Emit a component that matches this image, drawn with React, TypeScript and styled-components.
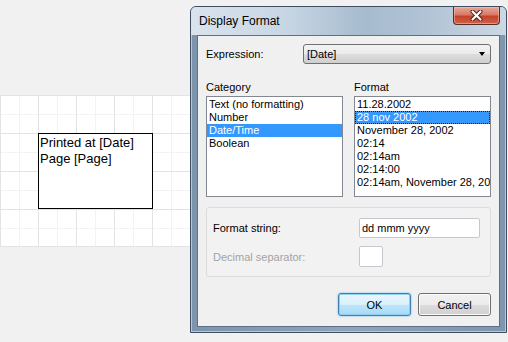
import React from "react";
import styled, { createGlobalStyle } from "styled-components";

const Global = createGlobalStyle`
  html, body { margin: 0; padding: 0; background: #f0f0f0; }
  body { font-family: "Liberation Sans", Arial, sans-serif; }
  * { box-sizing: border-box; }
`;

const Page = styled.div`
  width: 508px;
  height: 342px;
  display: flex;
  align-items: flex-start;
  background: #f1f1f1;
  overflow: hidden;
`;

const LeftPane = styled.div`
  width: 190px;
  flex: none;
  display: flex;
  flex-direction: column;
  padding-top: 95px;
`;

const Grid = styled.div`
  position: relative;
  height: 152px;
  background-color: #ffffff;
  background-image:
    linear-gradient(to right, #e3e3e3 1px, transparent 1px),
    linear-gradient(to bottom, #e3e3e3 1px, transparent 1px),
    linear-gradient(to right, #f3f3f3 1px, transparent 1px),
    linear-gradient(to bottom, #f3f3f3 1px, transparent 1px);
  background-size: 38px 38px, 38px 38px, 19px 19px, 19px 19px;
  border-bottom: 1px solid #e3e3e3;
`;

const TextBox = styled.div`
  position: absolute;
  left: 38px;
  top: 38px;
  width: 115px;
  height: 76px;
  border: 1px solid #000;
  background: #fff;
  padding: 1px 0 0 1px;
  font-family: "Liberation Sans", Arial, sans-serif;
  font-size: 13px;
  line-height: 16px;
  color: #000;
`;

const Window = styled.div`
  width: 317px;
  height: 327px;
  margin-top: 6px;
  flex: none;
  display: flex;
  flex-direction: column;
  border: 1px solid #3e4e60;
  border-radius: 6px 6px 0 0;
  background: linear-gradient(to right, #7d94ad, #8ea4bb 50%, #7f96af);
  box-shadow: inset 0 0 0 1px #b9c8d8;
`;

const TitleBar = styled.div`
  height: 28px;
  flex: none;
  display: flex;
  align-items: flex-start;
  justify-content: space-between;
  border-radius: 5px 5px 0 0;
  background: linear-gradient(
    to right,
    #d9e3ed 0%,
    #c8d6e4 30%,
    #a7bbcf 55%,
    #b1c3d5 75%,
    #cbd8e5 100%
  );
  padding-left: 8px;
`;

const Title = styled.div`
  padding-top: 7px;
  font-size: 12px;
  line-height: 14px;
  color: #000;
`;

const CloseButton = styled.div`
  width: 47px;
  height: 18px;
  margin-right: 6px;
  display: flex;
  align-items: center;
  justify-content: center;
  border: 1px solid #5a2a24;
  border-top: none;
  border-radius: 0 0 4px 4px;
  background: linear-gradient(
    to bottom,
    #e7a797 0%,
    #d97a66 45%,
    #c2432c 55%,
    #cf6247 100%
  );
  box-shadow: inset 0 0 0 1px rgba(255, 200, 190, 0.5);
`;

const Client = styled.div`
  flex: 1;
  margin: 0 6px 5px 6px;
  border: 1px solid #5c7086;
  background: #f0f0f0;
  padding: 8px 8px 0 8px;
  display: flex;
  flex-direction: column;
  font-size: 11px;
  color: #000;
`;

const ExprRow = styled.div`
  display: flex;
  align-items: center;
  height: 20px;
`;

const ExprLabel = styled.div`
  width: 97px;
  flex: none;
`;

const Combo = styled.div`
  flex: 1;
  height: 20px;
  display: flex;
  align-items: center;
  justify-content: space-between;
  padding: 0 5px 0 3px;
  border: 1px solid #707070;
  border-radius: 3px;
  background: linear-gradient(to bottom, #f3f3f3 0%, #ebebeb 50%, #dddddd 51%, #cfcfcf 100%);
`;

const Arrow = styled.div`
  width: 0;
  height: 0;
  border-left: 3.5px solid transparent;
  border-right: 3.5px solid transparent;
  border-top: 4px solid #000;
`;

const ListsRow = styled.div`
  display: flex;
  gap: 11px;
  margin-top: 16px;
`;

const ListColumn = styled.div`
  width: 137px;
  display: flex;
  flex-direction: column;
  gap: 2px;
`;

const ListLabel = styled.div`
  line-height: 14px;
`;

const ListBox = styled.div`
  height: 101px;
  border: 1px solid #828790;
  background: #fff;
  padding: 1px 0 0 0;
  overflow: hidden;
`;

const Item = styled.div<{ $selected?: boolean; $focused?: boolean }>`
  height: 13px;
  line-height: 13px;
  padding-left: 2px;
  white-space: nowrap;
  overflow: hidden;
  background: ${(p) => (p.$selected ? "#3399ff" : "transparent")};
  color: ${(p) => (p.$selected ? "#fff" : "#000")};
  outline: ${(p) => (p.$focused ? "1px dotted #1a1a1a" : "none")};
  outline-offset: -1px;
`;

const Panel = styled.div`
  margin-top: 10px;
  border: 1px solid #dcdcdc;
  border-radius: 3px;
  background: #f2f2f2;
  padding: 10px 10px 9px 6px;
  display: flex;
  flex-direction: column;
  gap: 8px;
`;

const FieldRow = styled.div`
  display: flex;
  align-items: center;
`;

const FieldLabel = styled.div<{ $disabled?: boolean }>`
  width: 146px;
  flex: none;
  color: ${(p) => (p.$disabled ? "#a3a3a3" : "#000")};
`;

const Input = styled.div<{ $w: number; $h: number }>`
  width: ${(p) => p.$w}px;
  height: ${(p) => p.$h}px;
  border: 1px solid #c5c9cf;
  border-radius: 2px;
  background: #fff;
  padding-left: 2px;
  display: flex;
  align-items: center;
`;

const Buttons = styled.div`
  margin-top: 16px;
  display: flex;
  justify-content: flex-end;
  gap: 7px;
`;

const Button = styled.div<{ $default?: boolean }>`
  width: 73px;
  height: 23px;
  display: flex;
  align-items: center;
  justify-content: center;
  border-radius: 3px;
  border: 1px solid ${(p) => (p.$default ? "#3c7fb1" : "#707070")};
  background: ${(p) =>
    p.$default
      ? "linear-gradient(to bottom, #eaf6fd 0%, #d9f0fc 50%, #bee6fd 51%, #a7d9f5 100%)"
      : "linear-gradient(to bottom, #f2f2f2 0%, #ebebeb 50%, #dddddd 51%, #cfcfcf 100%)"};
  box-shadow: ${(p) =>
    p.$default ? "inset 0 0 0 1px #8ed0f2, 0 0 2px #60b4e6" : "inset 0 0 0 1px #fbfbfb"};
`;

const categories = ["Text (no formatting)", "Number", "Date/Time", "Boolean"];
const formats = [
  "11.28.2002",
  "28 nov 2002",
  "November 28, 2002",
  "02:14",
  "02:14am",
  "02:14:00",
  "02:14am, November 28, 20",
];

export default function App() {
  return (
    <>
      <Global />
      <Page>
        <LeftPane>
          <Grid>
            <TextBox>
              Printed at [Date]
              <br />
              Page [Page]
            </TextBox>
          </Grid>
        </LeftPane>
        <Window>
          <TitleBar>
            <Title>Display Format</Title>
            <CloseButton>
              <svg width="13" height="11" viewBox="0 0 13 11">
                <path
                  d="M2.5 1.5 L10.5 9.5 M10.5 1.5 L2.5 9.5"
                  stroke="#4a1c16"
                  strokeWidth="4"
                  strokeLinecap="round"
                />
                <path
                  d="M2.5 1.5 L10.5 9.5 M10.5 1.5 L2.5 9.5"
                  stroke="#ffffff"
                  strokeWidth="2.2"
                  strokeLinecap="round"
                />
              </svg>
            </CloseButton>
          </TitleBar>
          <Client>
            <ExprRow>
              <ExprLabel>Expression:</ExprLabel>
              <Combo>
                <span>[Date]</span>
                <Arrow />
              </Combo>
            </ExprRow>
            <ListsRow>
              <ListColumn>
                <ListLabel>Category</ListLabel>
                <ListBox>
                  {categories.map((c) => (
                    <Item key={c} $selected={c === "Date/Time"}>
                      {c}
                    </Item>
                  ))}
                </ListBox>
              </ListColumn>
              <ListColumn>
                <ListLabel>Format</ListLabel>
                <ListBox>
                  {formats.map((f) => (
                    <Item
                      key={f}
                      $selected={f === "28 nov 2002"}
                      $focused={f === "28 nov 2002"}
                    >
                      {f}
                    </Item>
                  ))}
                </ListBox>
              </ListColumn>
            </ListsRow>
            <Panel>
              <FieldRow>
                <FieldLabel>Format string:</FieldLabel>
                <Input $w={121} $h={20}>dd mmm yyyy</Input>
              </FieldRow>
              <FieldRow>
                <FieldLabel $disabled>Decimal separator:</FieldLabel>
                <Input $w={24} $h={21} />
              </FieldRow>
            </Panel>
            <Buttons>
              <Button $default>OK</Button>
              <Button>Cancel</Button>
            </Buttons>
          </Client>
        </Window>
      </Page>
    </>
  );
}
